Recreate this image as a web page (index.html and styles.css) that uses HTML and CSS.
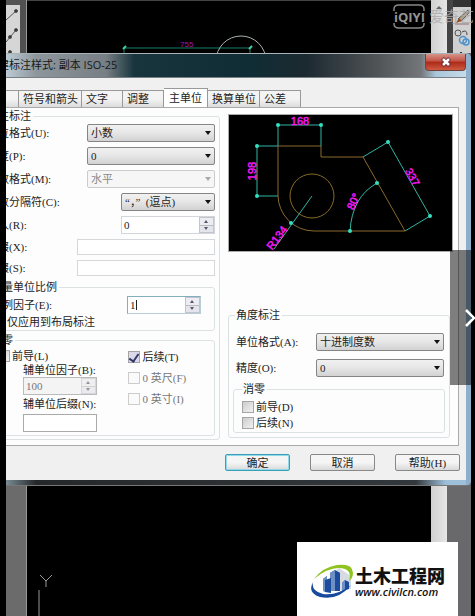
FILE: index.html
```html
<!DOCTYPE html>
<html lang="zh-CN">
<head>
<meta charset="utf-8">
<title>标注样式</title>
<link rel="stylesheet" href="styles.css">
</head>
<body>
<div class="stage">
  <div class="backdrop">
    <div class="tools-left">
      <svg class="tools-left-icons" viewBox="0 0 14 48" aria-hidden="true">
        <g stroke="#555" fill="#333"><path d="M0 15 10 6M0 37 10 25" fill="none"/><circle cx="10" cy="6" r="1.5"/><circle cx="10" cy="25" r="1.5"/><circle cx="4" cy="32" r="1.5"/><circle cx="4" cy="47" r="1.5"/></g>
      </svg>
    </div>
    <div class="rail-left"></div>
    <div class="canvas">
      <svg class="sketch" viewBox="0 0 300 60" aria-hidden="true">
        <path d="M97 47H223M97 47v12M223 47v12" stroke="#197e67" fill="none"/>
        <path d="M96 48l3-3M222 48l3-3" stroke="#3fd0a5" stroke-width="2"/>
        <circle cx="214" cy="60" r="25" stroke="#a9b3ad" fill="none"/>
        <text x="153" y="46" class="sketch-text">755</text>
      </svg>
      <svg class="axis" viewBox="0 0 30 44" aria-hidden="true">
        <path d="M13 3l6 6 6-6M19 9v6M12 18v26" stroke="#999" fill="none"/>
      </svg>
    </div>
    <div class="scroll"><span class="scroll-up"></span></div>
    <div class="rail-right"></div>
    <div class="tools-right">
      <svg class="tools-right-icons" viewBox="0 0 18 48" aria-hidden="true">
        <path d="M2 17H16" stroke="#8d6f6c"/><path d="M5 12 15 3l1 3-8 8z" fill="#aaa18f" stroke="#665c50"/><path d="M3 16l3-5 3 3z" fill="#9b4b22"/>
        <g fill="none"><circle cx="5" cy="26" r="3" stroke="#555"/><path d="M9 25q5-3 5 3" stroke="#444"/><circle cx="10" cy="33" r="3.5" stroke="#4d91cc" stroke-width="1.5"/><circle cx="13" cy="35" r="3" stroke="#4d91cc" stroke-width="1.5"/><path d="M8 45v3" stroke="#333" stroke-width="2"/></g>
      </svg>
    </div>
  </div>

  <main class="dialog">
    <header class="titlebar">
      <h1 class="title">新建标注样式: 副本 ISO-25</h1>
      <button class="close" type="button" aria-label="关闭"><svg viewBox="0 0 12 10" aria-hidden="true"><path d="M2.500 1.500 9.500 8.500M9.500 1.500 2.500 8.500" stroke="#623" stroke-width="4"/><path d="M3 2 9 8M9 2 3 8" stroke="#fff" stroke-width="2.500"/></svg></button>
    </header>
    <form class="body">
      <nav class="tabs">
        <button type="button" class="tab tab-first" aria-label="线"></button>
        <button type="button" class="tab">符号和箭头</button>
        <button type="button" class="tab">文字</button>
        <button type="button" class="tab">调整</button>
        <button type="button" class="tab tab-active">主单位</button>
        <button type="button" class="tab">换算单位</button>
        <button type="button" class="tab">公差</button>
      </nav>
      <div class="panel">
        <fieldset class="group">
          <legend>线性标注</legend>
          <div class="rows">
            <div class="row"><label for="lu">单位格式(U):</label><span class="combo wide"><select id="lu"><option>小数</option></select></span></div>
            <div class="row"><label for="lp">精度(P):</label><span class="combo wide"><select id="lp"><option>0</option></select></span></div>
            <div class="row"><label for="lm">分数格式(M):</label><span class="combo wide disabled"><select id="lm" disabled><option>水平</option></select></span></div>
            <div class="row"><label for="lc">小数分隔符(C):</label><span class="combo narrow"><select id="lc"><option>“，”&nbsp; (逗点)</option></select></span></div>
            <div class="row"><label for="lr">舍入(R):</label><span class="spin narrow"><input id="lr" type="text" value="0"><span class="steps"></span></span></div>
            <div class="row"><label for="lx">前缀(X):</label><input id="lx" class="field" type="text"></div>
            <div class="row"><label for="ls">后缀(S):</label><input id="ls" class="field" type="text"></div>
          </div>
          <fieldset class="group scale">
            <legend>测量单位比例</legend>
            <div class="row"><label for="le">比例因子(E):</label><span class="spin active"><input id="le" type="text" value="1"><span class="steps"></span></span></div>
            <label class="check layout-only"><input type="checkbox">仅应用到布局标注</label>
          </fieldset>
          <fieldset class="group zero">
            <legend>消零</legend>
            <div class="zero-grid">
              <div class="zero-left">
                <label class="check"><input type="checkbox">前导(L)</label>
                <label class="sub" for="zb">辅单位因子(B):</label>
                <span class="spin sub-field disabled"><input id="zb" type="text" value="100" disabled><span class="steps"></span></span>
                <label class="sub after" for="zn">辅单位后缀(N):</label>
                <input id="zn" class="sub-field suffix" type="text">
              </div>
              <div class="zero-right">
                <label class="check"><input type="checkbox" checked>后续(T)</label>
                <label class="check disabled"><input type="checkbox" disabled>0 英尺(F)</label>
                <label class="check disabled"><input type="checkbox" disabled>0 英寸(I)</label>
              </div>
            </div>
          </fieldset>
        </fieldset>

        <div class="side">
          <svg class="preview" viewBox="0 0 223 136" role="img" aria-label="预览">
            <g fill="none" stroke="#8a6a2c">
              <path d="M49 31H92V42H134L176 116H85A36 36 0 0 1 49 80Z"/><circle cx="83" cy="81" r="22"/>
            </g>
            <g fill="none" stroke="#2fb5a4">
              <path d="M49 31V10H92V31M49 31H28V81H49M134 42 159 27 201 101 176 116M83 81 45 134M148 68Q123 82 121 116"/>
            </g>
            <g fill="#35e0c0"><circle cx="49" cy="10" r="2"/><circle cx="92" cy="10" r="2"/><circle cx="28" cy="31" r="2"/><circle cx="28" cy="81" r="2"/><circle cx="159" cy="27" r="2"/><circle cx="201" cy="101" r="2"/><circle cx="148" cy="68" r="2"/><circle cx="121" cy="116" r="2"/><circle cx="62" cy="108" r="2"/></g>
            <g class="dims">
              <text x="71" y="10">168</text>
              <text transform="translate(27 56) rotate(-90)">198</text>
              <text transform="translate(180 64) rotate(60)">337</text>
              <text transform="translate(128 88) rotate(-66)">80°</text>
              <text transform="translate(51 125) rotate(-53)">R134</text>
            </g>
          </svg>
          <fieldset class="group angle">
            <legend>角度标注</legend>
            <div class="row"><label for="aa">单位格式(A):</label><span class="combo wide"><select id="aa"><option>十进制度数</option></select></span></div>
            <div class="row"><label for="ao">精度(O):</label><span class="combo wide"><select id="ao"><option>0</option></select></span></div>
            <fieldset class="group angle-zero">
              <legend>消零</legend>
              <label class="check"><input type="checkbox">前导(D)</label>
              <label class="check"><input type="checkbox">后续(N)</label>
            </fieldset>
          </fieldset>
        </div>
      </div>
      <footer class="actions">
        <button type="button" class="btn btn-default">确定</button>
        <button type="button" class="btn">取消</button>
        <button type="button" class="btn">帮助(H)</button>
      </footer>
    </form>
  </main>

  <svg class="watermark" viewBox="0 0 82 26" aria-hidden="true">
    <path d="M1 7V5Q1 1 6 1H26Q31 1 31 5V7M1 19V20Q1 24 6 24H26Q31 24 31 20V19" fill="none" stroke="#aaa" stroke-width="1.500"/>
    <text x="1" y="18" class="wm-latin">iQIYI</text>
    <text x="36" y="18" class="wm-cjk">爱奇艺</text>
  </svg>
  <button class="next" type="button" aria-label="下一张"><svg viewBox="0 0 10 20" aria-hidden="true"><path d="M1 2 9 10 1 18" fill="none" stroke="#fff" stroke-width="2.500"/></svg></button>
  <a class="brand" href="#">
    <svg viewBox="0 0 44 36" aria-hidden="true">
      <path d="M19 11 28 4 40 12V25L19 27z" fill="#d6dbe2"/>
      <path d="M12 15 16 12V28L12 27zM19 9 24 6 29 9V27H19zM31 19 34 16 38 18V25L31 27z" fill="#1d4c9d"/>
      <path d="M19 9 24 6V27H19zM31 19 34 16V26L31 27zM12 15 16 12V28L12 27z" fill="#6e91c5"/>
      <path d="M14 16 20 14V29L14 28zM25 7 29 9V27H25z" fill="#1d4c9d"/>
      <path d="M3 15Q12 3 26 1Q42-1 42 9Q42 14 38 17Q41 8 34 5Q20 1 3 15Z" fill="#8fc31f"/>
      <path d="M2 18Q-4 29 9 33Q27 37 40 21Q26 32 12 30Q0 27 2 18Z" fill="#174a9c"/>
    </svg>
    <span class="brand-text"><strong>土木工程网</strong><span>www.civilcn.com</span></span>
  </a>
</div>
</body>
</html>
```

FILE: styles.css
```css
* { box-sizing: border-box; }

body {
  margin: 0;
  background: #000;
  color: #222;
  font: 11px/14px "Liberation Serif", "Noto Sans CJK SC", serif;
}

button, input, select { font: inherit; color: inherit; margin: 0; }
label, legend, button { white-space: nowrap; }

.stage {
  position: relative;
  min-height: 100vh;
  padding: 53px 4px 0 6px;
  overflow: hidden;
}

/* Drawing application behind the dialog */
.backdrop {
  position: absolute;
  inset: 0 4px 0 6px;
  display: flex;
}
.tools-left { width: 14px; background: linear-gradient(#555 5px, #d6d6d6 5px 53px, #6b6b6b 53px); }
.tools-left-icons { display: block; width: 14px; height: 48px; margin-top: 5px; }
.rail-left { width: 7px; background: linear-gradient(#505050 480px, #6b6b6b 480px); border-right: 1px solid #999; }
.canvas {
  flex: 1;
  display: flex;
  flex-direction: column;
  justify-content: space-between;
  align-items: flex-start;
  border-top: 1px solid #444;
}
.sketch { width: 300px; height: 60px; }
.sketch-text { font: 8px "Liberation Sans", sans-serif; fill: #a316b4; }
.axis { width: 30px; height: 44px; }
.scroll { width: 16px; background: linear-gradient(90deg, #d0d0d0, #e6e6e6); }
.scroll-up {
  display: block;
  width: 6px;
  margin: 6px auto;
  border: 3px solid transparent;
  border-top: 0;
  border-bottom-color: #666;
}
.rail-right { width: 6px; background: linear-gradient(#444 480px, #69696c 480px); }
.tools-right { width: 18px; background: linear-gradient(#333 7px, #d0d0d0 7px 53px, #69696c 53px); }
.tools-right-icons { display: block; width: 18px; height: 48px; margin-top: 7px; }

/* Dialog frame */
.dialog {
  position: relative;
  overflow: hidden;
  border-top: 1px solid #a9b3ba;
  border-right: 5px solid #8faecb;
  border-bottom: 1px solid #777;
  border-radius: 0 5px 5px 0;
  background: linear-gradient(90deg, #7a8c95, #24282b 30px, #33383c 410px, #9fc0da 440px);
  padding-bottom: 5px;
}
.titlebar {
  display: flex;
  justify-content: space-between;
  align-items: flex-start;
  height: 24px;
  border-bottom: 1px solid #777f84;
  background: linear-gradient(90deg, #bccbd5, #8d969b 30px, #777f84 100px, #18353d 128px, #102d36 240px, #1c2930 300px, #4f5356 370px, #747679 415px, #a9c6da 430px, #c5dbea);
}
.title {
  margin: 0 0 0 -19px;
  padding-top: 3px;
  font: 11px/16px "Open Sans", "Noto Sans CJK SC", sans-serif;
  color: #15191b;
  white-space: nowrap;
}
.close {
  display: flex;
  justify-content: center;
  align-items: center;
  width: 41px;
  height: 17px;
  padding: 0;
  border: 1px solid #71403c;
  border-top: 0;
  border-radius: 0 0 4px 4px;
  background: linear-gradient(#d69488, #c15245 45%, #ad2818 50%, #cd5b42);
}
.close svg { width: 12px; height: 10px; }

.body {
  margin-left: -26px;
  padding: 10px 6px 9px 0;
  background: #f0f0f0;
}

/* Tabs */
.tabs { display: flex; align-items: flex-end; height: 19px; }
.tab {
  height: 17px;
  min-width: 41px;
  padding: 0 3px 0 4px;
  border: 1px solid #999;
  border-left: 0;
  border-bottom: 0;
  background: linear-gradient(#f3f3f3 50%, #dcdcdc);
  line-height: 15px;
  text-align: left;
}
.tab-first { width: 39px; min-width: 0; }
.tab-active { height: 19px; padding: 0 5px; background: #fff; }

.panel {
  display: grid;
  grid-template-columns: 240fr 226fr;
  gap: 7px;
  margin-right: 1px;
  padding: 1px 5px 5px 0;
  border: 1px solid #aaa;
  border-left: 0;
  background: #fdfdfd;
}

/* Grouped controls */
.group {
  min-width: 0;
  margin: 0;
  padding: 1px 4px 3px;
  border: 1px solid #dce2e4;
  border-radius: 3px;
}
legend { height: 14px; margin-left: 1px; padding: 0 2px 0 1px; }
.rows { display: flex; flex-direction: column; gap: 5px; }
.row { display: flex; justify-content: space-between; align-items: center; padding-left: 2px; }
.wide { width: 128px; }
.narrow { width: 94px; }

.combo { position: relative; height: 18px; }
.combo select {
  appearance: none;
  display: block;
  width: 100%;
  height: 18px;
  padding: 0 14px 0 3px;
  border: 1px solid #858585;
  border-radius: 2px;
  background: linear-gradient(#f1f1f1, #e6e6e6 50%, #d2d2d2);
}
.combo::after {
  content: "";
  position: absolute;
  right: 4px;
  top: 7px;
  border: 3px solid transparent;
  border-top: 4px solid #111;
  border-bottom: 0;
}
.combo.disabled select { border-color: #ccc; background: #f6f6f6; color: #888; opacity: 1; }
.combo.disabled::after { border-top-color: #aaa; }

.field {
  width: 138px;
  height: 16px;
  border: 1px solid #d5d8da;
  background: #fff;
}

.spin {
  display: flex;
  height: 18px;
  border: 1px solid #d2d6da;
  background: #fff;
}
.spin input { flex: 1; min-width: 0; padding: 0 2px; border: 0; background: none; }
.steps {
  position: relative;
  width: 15px;
  border: 1px solid #c4c4cc;
  background: linear-gradient(#ececf2 7px, #bbb 7px 8px, #e4e4ec 8px);
}
.steps::before, .steps::after { content: ""; position: absolute; left: 4px; border: 2px solid transparent; }
.steps::before { top: 2px; border-top: 0; border-bottom: 3px solid #556; }
.steps::after { bottom: 2px; border-bottom: 0; border-top: 3px solid #556; }
.spin.active { width: 74px; margin-right: 9px; border-color: #84adbe #b9cdd8 #b9cdd8 #84adbe; }
.spin.active input { background: linear-gradient(#222, #222) 8px 3px / 1px 10px no-repeat; }
.spin.disabled { color: #777; background: #f4f4f4; border-color: #bbb; }
.spin.disabled .steps { opacity: 0.600; }

.check { display: flex; align-items: center; gap: 2px; height: 16px; }
.check.disabled { color: #777; }
.check input {
  appearance: none;
  flex: none;
  width: 12px;
  height: 12px;
  border: 1px solid #a5a5a5;
  background: linear-gradient(135deg, #ccc, #f2f2f2);
}
.check.disabled input { border-color: #ccc; background: #fafafa; }
.check input:checked { display: grid; place-items: center; background: #dadaea; }
.check input:checked::before {
  content: "";
  width: 4px;
  height: 8px;
  border: solid #34396c;
  border-width: 0 2px 2px 0;
  transform: rotate(35deg);
}

.scale { margin-top: 4px; padding: 2px 4px 0; }
.scale legend, .zero legend { margin-left: 0; }
.scale .row { padding-left: 1px; }
.layout-only { margin-left: 3px; }
.zero { margin-top: 2px; padding: 1px 4px 3px; }
.zero-grid { display: grid; grid-template-columns: 141fr 83fr; }
.zero-left { display: flex; flex-direction: column; padding-left: 8px; }
.zero-left .check { height: 15px; }
.sub { margin-left: 25px; }
.sub-field { width: 74px; margin-left: 25px; }
.sub.after { margin-top: 2px; }
.suffix { height: 18px; margin-top: 3px; border: 1px solid #aaa; background: #fff; }
.zero-right { display: flex; flex-direction: column; gap: 5px; padding-top: 1px; }

.side {
  display: flex;
  flex-direction: column;
  justify-content: space-between;
  min-width: 0;
  padding: 5px 0 2px 1px;
}
.preview { width: 100%; height: auto; border: 1px solid #aaa; background: #000; }
.dims { font: 11px "Liberation Sans", sans-serif; fill: #f218f2; text-anchor: middle; stroke: #f218f2; stroke-width: 0.500; }

.angle { margin-right: 3px; padding: 11px 4px 4px; }
.angle .row { margin-bottom: 8px; padding: 0 1px 0 3px; }
.angle .row + .row { margin-bottom: 5px; }
.angle legend { margin-left: 2px; }
.angle-zero { padding: 3px 8px 1px; }
.angle-zero legend { margin-left: 0; }

.actions { display: flex; justify-content: flex-end; gap: 20px; padding-top: 8px; }
.btn {
  width: 65px;
  height: 17px;
  padding: 0;
  border: 1px solid #888;
  border-radius: 2px;
  background: linear-gradient(#f5f5f5 50%, #d9d9d9);
  line-height: 14px;
}
.btn-default { border-color: #3c9fb8; box-shadow: inset 0 0 0 1px #8fd9ea; }

/* Overlays */
.watermark { position: absolute; top: 4px; right: 0; width: 82px; height: 26px; opacity: 0.800; }
.wm-latin { font: 700 13px "Open Sans", sans-serif; fill: #bbb; }
.wm-cjk { font: 15px "Noto Sans CJK SC", sans-serif; fill: #aaa; }
.next {
  position: absolute;
  top: 250px;
  right: 0;
  display: flex;
  justify-content: flex-end;
  align-items: center;
  width: 25px;
  height: 135px;
  padding: 0;
  border: 0;
  background: rgb(0 0 0 / 50%);
}
.next svg { width: 10px; height: 20px; }
.brand {
  position: absolute;
  right: 17px;
  bottom: 0;
  display: flex;
  align-items: center;
  width: 161px;
  height: 74px;
  padding: 6px 0 0 14px;
  background: #fff;
  color: #111;
  text-decoration: none;
}
.brand svg { flex: none; width: 44px; height: 36px; }
.brand-text { display: flex; flex-direction: column; font: italic 600 11px/14px "Open Sans", sans-serif; }
.brand-text strong { font: 900 18px/20px "Noto Sans CJK SC", sans-serif; white-space: nowrap; }
```
